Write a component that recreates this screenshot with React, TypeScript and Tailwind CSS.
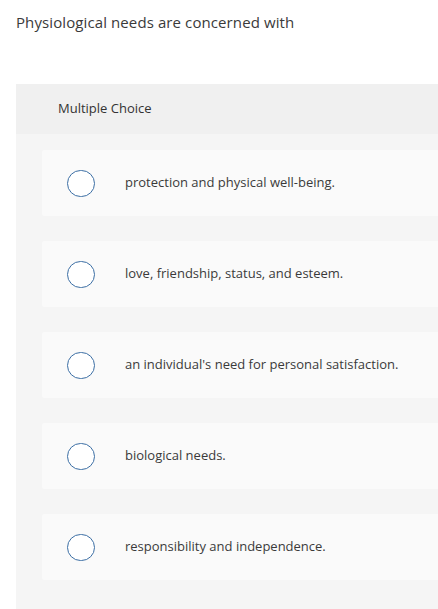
import React from 'react';

const options = [
  'protection and physical well-being.',
  'love, friendship, status, and esteem.',
  "an individual's need for personal satisfaction.",
  'biological needs.',
  'responsibility and independence.',
];

export default function App() {
  return (
    <div className="min-h-[609px] bg-white text-[#333] font-['Open_Sans',sans-serif]">
      <div className="px-4 pt-[12px] h-[84px]">
        <p className="text-[15px] leading-[20px] tracking-[0.1px] text-[#3a3a3a]">Physiological needs are concerned with</p>
      </div>
      <div className="ml-4 bg-[#f5f5f5] pb-[30px]">
        <div className="bg-[#f0f0f0] h-[50px] flex items-center pl-[42px]">
          <span className="text-[13px] text-[#333]">Multiple Choice</span>
        </div>
        <div className="pl-[26px] pt-[16px] flex flex-col gap-[25px]">
          {options.map((opt) => (
            <div key={opt} className="bg-[#fafafa] h-[66px] flex items-center rounded-l-[2px]">
              <span className="ml-[25px] w-[28px] h-[27px] rounded-full border-[1.5px] border-[#3b6ea4] bg-white shrink-0" />
              <span className="ml-[30px] text-[13px] text-[#3a3a3a]">{opt}</span>
            </div>
          ))}
        </div>
      </div>
    </div>
  );
}
